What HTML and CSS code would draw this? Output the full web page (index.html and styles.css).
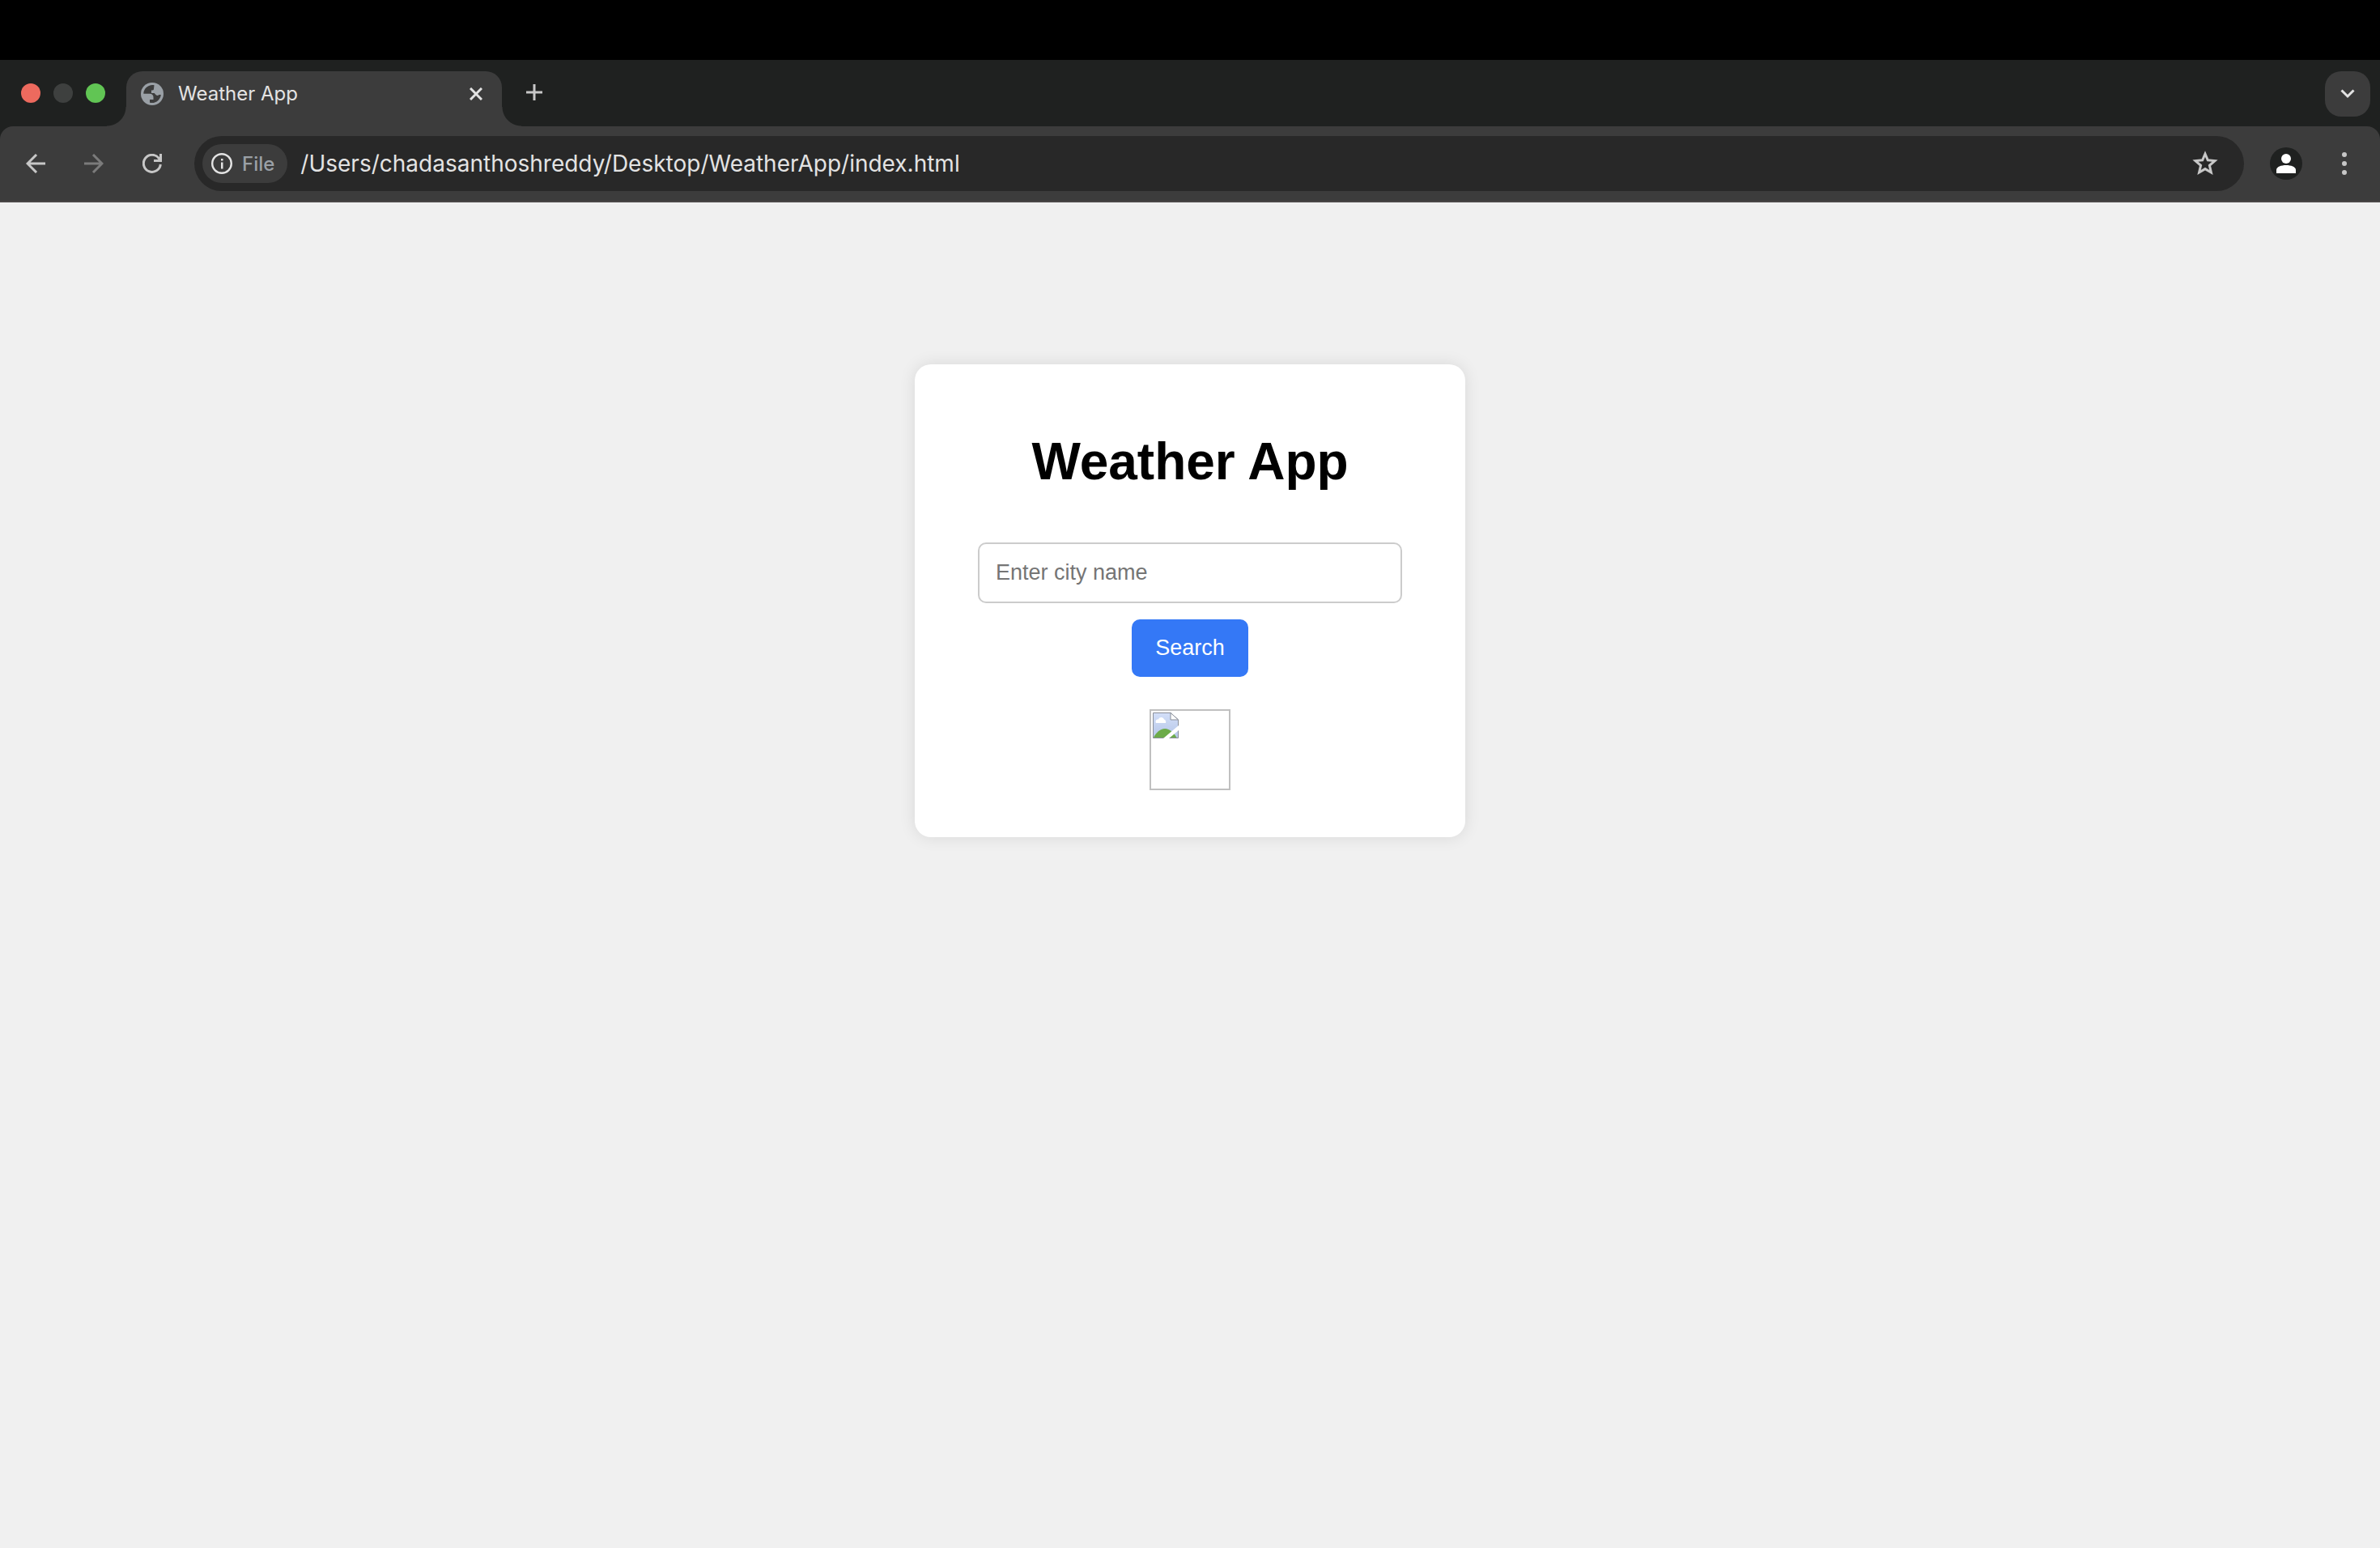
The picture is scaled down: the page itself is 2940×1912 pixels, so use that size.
FILE: index.html
```html
<!DOCTYPE html>
<html lang="en">
<head>
<meta charset="utf-8">
<meta name="viewport" content="width=device-width, initial-scale=1">
<title>Weather App</title>
<link rel="stylesheet" href="styles.css">
</head>
<body>
<div class="menu-bar"></div>
<header class="browser">
  <div class="tab-strip">
    <div class="window-controls">
      <button class="light light-close" aria-label="Close window"></button>
      <button class="light light-minimize" aria-label="Minimize window"></button>
      <button class="light light-zoom" aria-label="Zoom window"></button>
    </div>
    <div class="tab">
      <svg class="favicon" viewBox="0 0 28 28" aria-hidden="true">
        <circle cx="14" cy="14" r="14" fill="#9aa0a6"/>
        <path d="M16.500 3.200C9 2 3.500 7.500 3.300 13.700H11c2.800 0 4.500 1.600 4.500 4.300v3H11v3.700c6.500 1.800 13-2.700 13.800-9.700h-2.300c-1 1-2.500 1.200-3.500.500-1.200-.8-1.500-2-2.500-2.500H13V9.500h1.500c1 0 1.500-.8 1.500-2z" fill="#3c3c3c"/>
      </svg>
      <span class="tab-title">Weather App</span>
      <button class="icon-button tab-close" aria-label="Close tab">
        <svg width="16" height="16" viewBox="0 0 16 16"><path d="M1 1l14 14M15 1L1 15" stroke="#e3e3e3" stroke-width="3"/></svg>
      </button>
    </div>
    <button class="icon-button new-tab" aria-label="New tab">
      <svg width="20" height="20" viewBox="0 0 20 20"><path d="M10 0v20M0 10h20" stroke="#c7c7c7" stroke-width="3"/></svg>
    </button>
    <button class="icon-button tab-search" aria-label="Search tabs">
      <svg width="18" height="12" viewBox="0 0 18 12"><path d="M1.500 1.500L9 9l7.500-7.500" fill="none" stroke="#e3e3e3" stroke-width="3"/></svg>
    </button>
  </div>
  <div class="toolbar">
    <nav class="nav-buttons">
      <button class="icon-button" aria-label="Back">
        <svg width="24" height="24" viewBox="0 0 24 24"><path d="M24 12H2M13 1L2 12l11 11" fill="none" stroke="#c7c7c7" stroke-width="3"/></svg>
      </button>
      <button class="icon-button" aria-label="Forward">
        <svg width="24" height="24" viewBox="0 0 24 24"><path d="M0 12h22M11 1l11 11-11 11" fill="none" stroke="#7b7b7b" stroke-width="3"/></svg>
      </button>
      <button class="icon-button" aria-label="Reload">
        <svg width="24" height="24" viewBox="0 0 24 24"><path d="M22.300 13A10.500 10.500 0 1 1 20 5.200L22 8M22.500 0v8.500H14" fill="none" stroke="#c7c7c7" stroke-width="3"/></svg>
      </button>
    </nav>
    <div class="address-bar">
      <button class="site-info">
        <svg width="26" height="26" viewBox="0 0 26 26" aria-hidden="true"><circle cx="13" cy="13" r="11.800" fill="none" stroke="#e3e3e3" stroke-width="2.400"/><path d="M12 11.500h2.500v8H12zM12 7h2.500v2.500H12z" fill="#e3e3e3"/></svg>
        <span>File</span>
      </button>
      <input class="address" type="text" aria-label="Address" value="/Users/chadasanthoshreddy/Desktop/WeatherApp/index.html">
      <button class="icon-button bookmark" aria-label="Bookmark this tab">
        <svg width="32" height="32" viewBox="0 0 32 32"><path d="M16 4l3.300 7.800 8.700.8-6.600 5.800 2 8.600L16 22.600 8.600 27l2-8.600L4 12.600l8.700-.8z" fill="none" stroke="#c7c7c7" stroke-width="3"/></svg>
      </button>
    </div>
    <button class="icon-button profile" aria-label="Profile">
      <svg width="40" height="40" viewBox="0 0 40 40"><circle cx="20" cy="20" r="20" fill="#1f2120"/><circle cx="20" cy="14" r="6" fill="#fff"/><path d="M8 32v-4c0-4 6-6 12-6s12 2 12 6v4z" fill="#fff"/></svg>
    </button>
    <button class="icon-button more" aria-label="More">
      <svg width="6" height="28" viewBox="0 0 6 28" fill="#c7c7c7"><circle cx="3" cy="3" r="3"/><circle cx="3" cy="14" r="3"/><circle cx="3" cy="25" r="3"/></svg>
    </button>
  </div>
</header>
<main class="page">
  <form class="card">
    <h1 class="card-title">Weather App</h1>
    <input class="city" type="text" placeholder="Enter city name" aria-label="City name">
    <button class="search" type="button">Search</button>
    <div class="weather-icon" role="img" aria-label="Weather icon">
      <svg width="32" height="32" viewBox="0 0 32 32">
        <defs><linearGradient id="sky" x1="0" y1="0" x2="0" y2="1"><stop offset="0" stop-color="#d3dff8"/><stop offset="1" stop-color="#b5c6e8"/></linearGradient></defs>
        <path d="M.5.5H22L31.500 9v22.500H.5z" fill="url(#sky)" stroke="#8a8f99"/>
        <path d="M22 .5V9h9.500z" fill="#fff" stroke="#8a8f99"/>
        <path d="M4 13c-1.500-3 1-5 3-4.500 1.500-3.500 6-3 7 0 2 .5 2.500 2.500 2 4.500z" fill="#fff"/>
        <path d="M1 31c3-6 8-11 14-11s11 5 14.500 11z" fill="#6cab49"/>
        <path d="M13 32L32 16v6L20 32z" fill="#fff"/>
      </svg>
    </div>
  </form>
</main>
</body>
</html>
```

FILE: styles.css
```css
* { box-sizing: border-box; }

body {
  margin: 0;
  min-height: 100vh;
  background: #f0f0f0;
  font-family: "Liberation Sans", Arial, sans-serif;
}

button, input { font-family: inherit; }

.menu-bar { height: 74px; background: #000; }

.browser {
  background: #1f2120;
  font-family: Inter, "Liberation Sans", sans-serif;
}

.icon-button {
  display: flex;
  align-items: center;
  justify-content: center;
  padding: 0;
  border: 0;
  background: none;
}

.icon-button svg { display: block; }

.tab-strip {
  display: flex;
  align-items: flex-start;
  height: 82px;
  padding: 14px 12px 0 26px;
}

.window-controls {
  display: flex;
  gap: 16px;
  padding-top: 15px;
  margin-right: 26px;
}

.light {
  width: 24px;
  height: 24px;
  padding: 0;
  border: 0;
  border-radius: 50%;
}

.light-close { background: #ed6a5e; }
.light-minimize { background: #3e403f; }
.light-zoom { background: #61c554; }

.tab {
  position: relative;
  display: flex;
  align-items: center;
  width: 464px;
  height: 68px;
  padding: 0 24px 12px 18px;
  border-radius: 20px 20px 0 0;
  background: #3c3c3c;
}

.tab::before,
.tab::after {
  content: "";
  position: absolute;
  bottom: 0;
  width: 24px;
  height: 24px;
}

.tab::before {
  right: 100%;
  background: radial-gradient(circle at 0 0, transparent 23px, #3c3c3c 24px);
}

.tab::after {
  left: 100%;
  background: radial-gradient(circle at 100% 0, transparent 23px, #3c3c3c 24px);
}

.favicon { width: 28px; height: 28px; margin-right: 18px; }

.tab-title {
  flex: 1;
  color: #e3e3e3;
  font-size: 24px;
  line-height: 32px;
}

.new-tab { width: 56px; height: 52px; margin-left: 12px; }

.tab-search {
  width: 56px;
  height: 56px;
  margin-left: auto;
  border-radius: 20px;
  background: #3c3c3c;
}

.toolbar {
  display: flex;
  align-items: center;
  height: 94px;
  padding: 0 41px 0 32px;
  border-bottom: 2px solid #494747;
  border-radius: 16px 16px 0 0;
  background: #3c3c3c;
}

.nav-buttons { display: flex; gap: 48px; margin-right: 40px; }

.address-bar {
  display: flex;
  flex: 1;
  align-items: center;
  height: 68px;
  padding: 0 32px 0 10px;
  border-radius: 34px;
  background: #282828;
}

.site-info {
  display: flex;
  align-items: center;
  gap: 12px;
  height: 48px;
  padding: 0 16px 0 11px;
  border: 0;
  border-radius: 24px;
  background: #3c3c3c;
  color: #9aa0a6;
  font-size: 24px;
  font-weight: 500;
}

.address {
  flex: 1;
  height: 48px;
  margin-left: 16px;
  padding: 0;
  border: 0;
  outline: 0;
  background: none;
  color: #e3e3e3;
  font-size: 28px;
}

.profile { margin-left: 32px; }
.more { margin-left: 49px; }

.page {
  display: flex;
  justify-content: center;
  padding: 200px 40px;
}

.card {
  display: flex;
  flex-direction: column;
  align-items: center;
  width: 100%;
  max-width: 680px;
  padding: 40px 78px 58px;
  border-radius: 20px;
  background: #fff;
  box-shadow: 0 0 20px rgba(0, 0, 0, 0.1);
}

.card-title {
  margin: 43px 0 63px;
  color: #000;
  font-size: 64px;
  line-height: 74px;
}

.city {
  width: 100%;
  height: 75px;
  padding: 0 20px;
  border: 2px solid #ccc;
  border-radius: 10px;
  background: #fff;
  font-size: 27px;
}

.city::placeholder { color: #757575; }

.search {
  height: 71px;
  margin-top: 20px;
  padding: 0 29px;
  border: 0;
  border-radius: 10px;
  background: #3478f6;
  color: #fff;
  font-size: 27px;
}

.weather-icon {
  width: 100px;
  height: 100px;
  margin-top: 40px;
  padding: 2px;
  border: 2px solid silver;
}

.weather-icon svg { display: block; }
```
